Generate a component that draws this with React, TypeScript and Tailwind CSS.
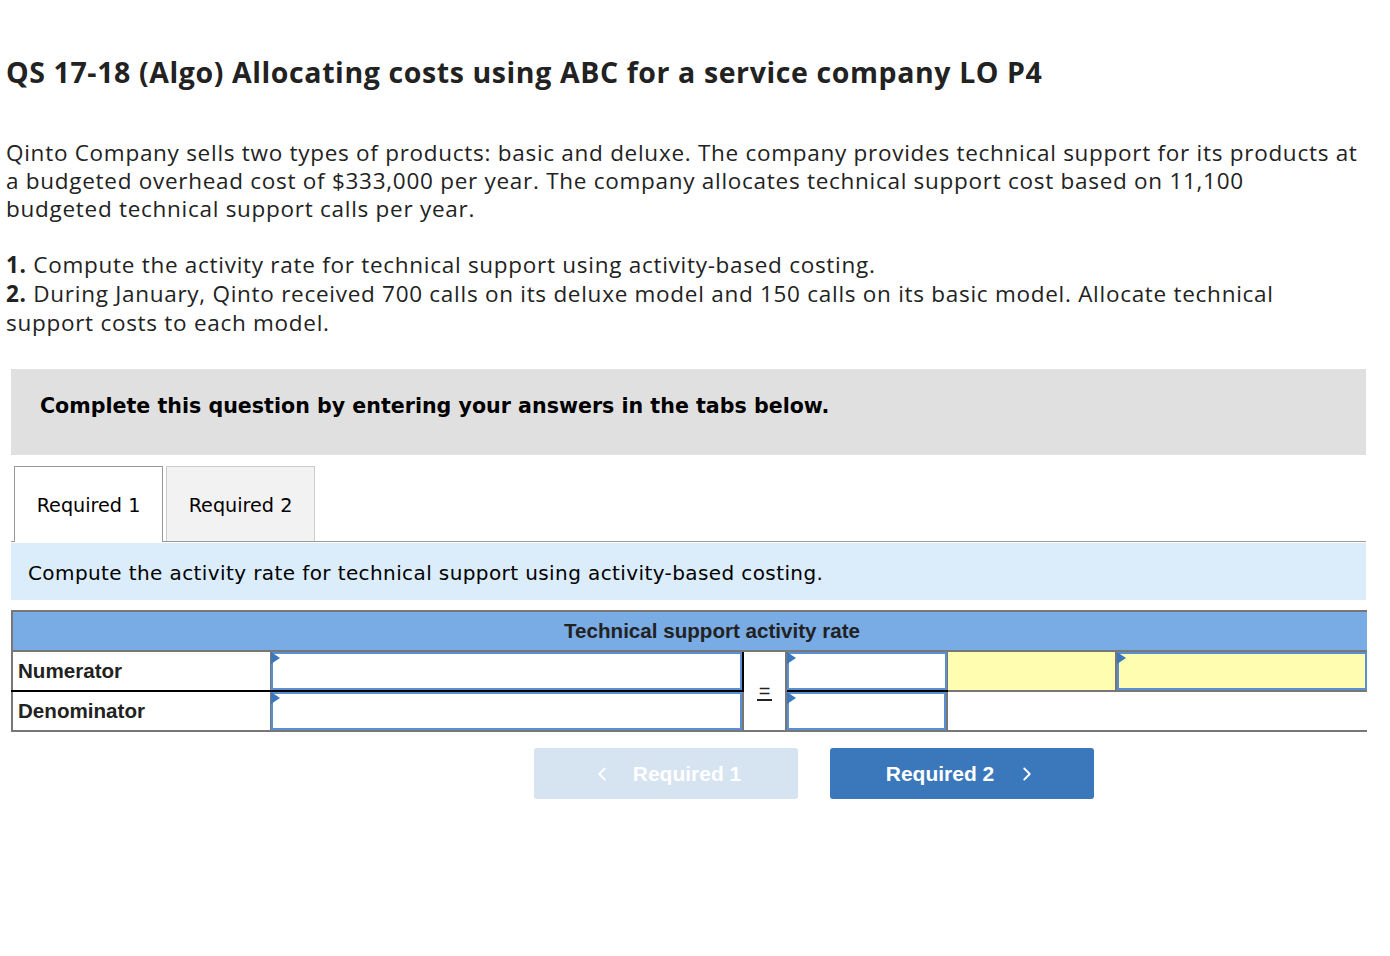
import React from "react";
import { ChevronLeft, ChevronRight } from "lucide-react";

const proxima = { fontFamily: "'Open Sans', Lato, sans-serif" };
const verdana = { fontFamily: "'DejaVu Sans', Verdana, sans-serif" };
const arial = { fontFamily: "'Liberation Sans', Arial, sans-serif" };

// -------------------- Input cell --------------------
const AnswerBox: React.FC<{ yellow?: boolean }> = ({ yellow }) => (
  <div
    className={`relative h-[38px] border-2 border-[#5a8fd2] ${
      yellow ? "bg-[#fffdaf]" : "bg-white"
    }`}
  >
    <span className="absolute -left-[2px] -top-[2px] w-0 h-0 border-y-[6px] border-y-transparent border-l-[9px] border-l-[#3a77bb]" />
  </div>
);

const App: React.FC = () => {
  return (
    <div className="w-[1390px] min-h-[956px] bg-white text-[#1a1a1a] px-[6px]">
      <h1
        className="pt-[55px] text-[28.5px] leading-[34px] tracking-[0.6px] font-bold text-[#222]"
        style={proxima}
      >
        QS 17-18 (Algo) Allocating costs using ABC for a service company LO P4
      </h1>

      <p
        className="mt-[50px] whitespace-nowrap text-[22.5px] leading-[28px] tracking-[0.72px] text-[#222]"
        style={proxima}
      >
        Qinto Company sells two types of products: basic and deluxe. The company
        provides technical support for its products at
        <br />a budgeted overhead cost of $333,000 per year. The company
        allocates technical support cost based on 11,100
        <br />
        budgeted technical support calls per year.
      </p>

      <div
        className="mt-[27px] whitespace-nowrap text-[22.5px] leading-[29px] tracking-[0.72px] text-[#222]"
        style={proxima}
      >
        <p>
          <span className="font-bold">1.</span> Compute the activity rate for
          technical support using activity-based costing.
        </p>
        <p>
          <span className="font-bold">2.</span> During January, Qinto received
          700 calls on its deluxe model and 150 calls on its basic model.
          Allocate technical
          <br />
          support costs to each model.
        </p>
      </div>

      {/* Question box */}
      <div className="mt-[32px] ml-[5px] w-[1355px]">
        <div
          className="bg-[#e0e0e0] pl-[29px] pt-[24px] pb-[36px] text-[20.6px] leading-[26px] font-bold text-black"
          style={verdana}
        >
          Complete this question by entering your answers in the tabs below.
        </div>

        {/* Tabs */}
        <div
          className="mt-[11px] flex items-end border-b border-[#999] pl-[3px] text-[19.2px] text-black"
          style={verdana}
        >
          <div className="-mb-px h-[76px] w-[149px] border border-b-0 border-[#999] bg-white flex items-center justify-center pt-[4px]">
            Required 1
          </div>
          <div className="ml-[3px] h-[75px] w-[149px] border border-b-0 border-[#ccc] bg-[#f2f2f2] flex items-center justify-center pt-[4px]">
            Required 2
          </div>
        </div>

        <div
          className="mt-px h-[57px] bg-[#dbecfa] pl-[17px] flex items-center pt-[2px] text-[20px] tracking-[0.4px] text-black"
          style={verdana}
        >
          Compute the activity rate for technical support using activity-based
          costing.
        </div>

        {/* Answer table */}
        <table
          className="mt-[10px] w-[1355px] table-fixed border-collapse text-[20.6px] text-[#222]"
          style={arial}
        >
          <colgroup>
            <col className="w-[258px]" />
            <col className="w-[473px]" />
            <col className="w-[43px]" />
            <col className="w-[161px]" />
            <col className="w-[169px]" />
            <col className="w-[251px]" />
          </colgroup>
          <thead>
            <tr>
              <th
                colSpan={6}
                className="h-[40px] bg-[#79ace4] border-t-2 border-l-2 border-b-2 border-[#777] pl-[44px] font-bold text-center"
              >
                Technical support activity rate
              </th>
            </tr>
          </thead>
          <tbody>
            <tr className="h-[40px]">
              <td className="border-l-2 border-l-[#777] border-b-2 border-b-black border-r border-r-[#777] pl-[5px] font-bold align-middle">
                Numerator
              </td>
              <td className="border-b-2 border-b-black border-r-2 border-r-black p-0 align-top">
                <AnswerBox />
              </td>
              <td
                rowSpan={2}
                className="border-b-2 border-b-[#777] border-r-2 border-r-[#777] p-0 text-center align-middle"
              >
                <span className="inline-block border-b-2 border-[#222] text-[20px] leading-[16px] px-[2px]">
                  =
                </span>
              </td>
              <td className="border-b-2 border-b-black border-r border-r-[#777] p-0 align-top">
                <AnswerBox />
              </td>
              <td className="bg-[#fffdaf] border-b-2 border-b-[#777] border-r-2 border-r-[#777] p-0" />
              <td className="bg-[#fffdaf] border-b-2 border-b-[#777] p-0 align-top">
                <AnswerBox yellow />
              </td>
            </tr>
            <tr className="h-[40px]">
              <td className="border-l-2 border-l-[#777] border-b-2 border-b-[#777] border-r border-r-[#777] pl-[5px] font-bold align-middle">
                Denominator
              </td>
              <td className="border-b-2 border-b-[#777] border-r-2 border-r-[#777] p-0 align-top">
                <AnswerBox />
              </td>
              <td className="border-b-2 border-b-[#777] border-r-2 border-r-[#777] p-0 align-top">
                <AnswerBox />
              </td>
              <td className="border-b-2 border-b-[#777] p-0" />
              <td className="border-b-2 border-b-[#777] p-0" />
            </tr>
          </tbody>
        </table>

        {/* Navigation */}
        <div
          className="mt-[16px] ml-[523px] flex gap-[32px] text-[21px] font-bold text-white"
          style={arial}
        >
          <button className="h-[51px] w-[264px] rounded-[3px] bg-[#d6e3f1] flex items-center justify-center gap-[20px]">
            <ChevronLeft size={22} strokeWidth={2} />
            <span>Required 1</span>
          </button>
          <button className="h-[51px] w-[264px] rounded-[3px] bg-[#3a77bb] flex items-center justify-center gap-[22px]">
            <span>Required 2</span>
            <ChevronRight size={22} strokeWidth={2} />
          </button>
        </div>
      </div>
    </div>
  );
};

export default App;
